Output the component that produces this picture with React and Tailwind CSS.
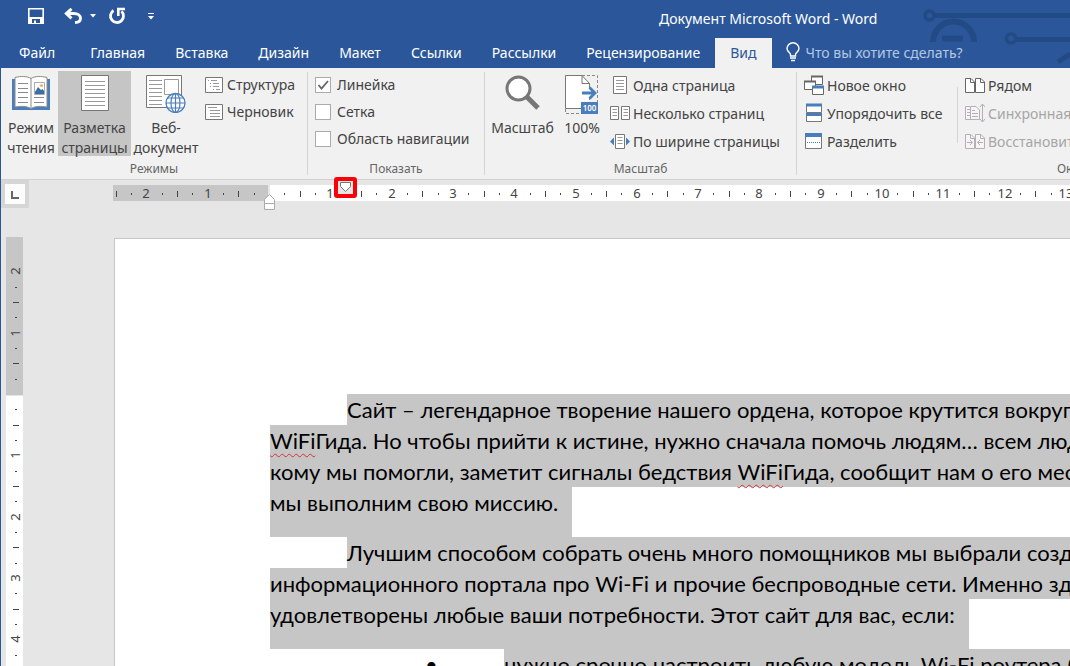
import { useState } from "react"

const CM = 61.3

const tabs = ["Главная", "Вставка", "Дизайн", "Макет", "Ссылки", "Рассылки", "Рецензирование", "Вид"]

/* ---------- title bar icons ---------- */

const SaveIcon = () => (
  <svg width="16" height="16" viewBox="0 0 16 16" fill="none">
    <path d="M.8 .8H15.200V15.200H.8Z" stroke="#fff" strokeWidth="1.600" />
    <path d="M1 9H15V15H1Z" fill="#fff" />
    <path d="M4 11H12V15H4Z" fill="#2b579a" />
    <path d="M6 12.500H8V15H6Z" fill="#fff" />
  </svg>
)

const UndoIcon = () => (
  <svg width="18" height="16" viewBox="0 0 18 16" fill="none">
    <path d="M2 5.500H10C14 5.500 16.500 7.500 16.500 10.300C16.500 13 14.500 14.500 11 14.500" stroke="#fff" strokeWidth="2.800" />
    <path d="M7.500 .8L2.400 5.500L7.500 10.300" stroke="#fff" strokeWidth="3" />
  </svg>
)

const RedoIcon = () => (
  <svg width="18" height="18" viewBox="0 0 18 18" fill="none">
    <path d="M5.500 3.500A6.500 6.500 0 1 0 13.500 4.300" stroke="#fff" strokeWidth="2.800" />
    <path d="M10.300 9V2H17" stroke="#fff" strokeWidth="2.600" />
  </svg>
)

const CaretIcon = () => (
  <svg width="6" height="4" viewBox="0 0 6 4">
    <path d="M0 0H6L3 3.500Z" fill="#fff" />
  </svg>
)

const CustomizeIcon = () => (
  <svg width="6" height="7" viewBox="0 0 6 7">
    <path d="M0 0H6V1H0ZM0 3H6L3 6.500Z" fill="#fff" />
  </svg>
)

const BulbIcon = () => (
  <svg width="14" height="20" viewBox="0 0 14 20" fill="none" stroke="#fff" strokeWidth="1.400">
    <path d="M4.500 14V12.500C4.500 10.500 1 9.500 1 6.500A6 5.800 0 0 1 13 6.500C13 9.500 9.500 10.500 9.500 12.500V14Z" />
    <path d="M4 16H10M5 18.500H9" strokeWidth="1.600" />
  </svg>
)

const Circuit = () => (
  <svg className="absolute top-0 right-0" width="150" height="68" viewBox="0 0 150 68" fill="none" stroke="#224a84">
    <circle cx="9.500" cy="15.500" r="4.500" strokeWidth="3.500" />
    <path d="M14 15.500H150" strokeWidth="5" />
    <path d="M13 42A20.500 20.500 0 0 1 54 42" strokeWidth="6" />
    <path d="M22 38.500H43" strokeWidth="6" />
    <circle cx="91" cy="38.500" r="4.500" strokeWidth="3.500" />
    <path d="M96 39.500H150" strokeWidth="5" />
    <path d="M138 62L150 54" strokeWidth="5" />
  </svg>
)

/* ---------- ribbon icons ---------- */

const BookIcon = () => (
  <svg width="38" height="36" viewBox="0 0 38 36" fill="none">
    <path d="M0 4H38V35H0Z" fill="#4a7ebb" />
    <path d="M3 2.500C9 1 15 1 19 3.500C23 1 29 1 35 2.500V32C29 31 23 31 19 33.500C15 31 9 31 3 32Z" fill="#fff" stroke="#8a8a8a" />
    <path d="M19 3.500V33" stroke="#8a8a8a" />
    <path d="M6 8.500H16M6 13.500H16M6 17.500H16M6 22.500H16M6 27.500H16M22 22.500H32M22 27.500H32" stroke="#8a8a8a" />
    <path d="M22.500 7.500H32.500V19.500H22.500Z" fill="#fff" stroke="#aaa" />
    <path d="M23 19V17L26 12L29 15L30.500 14L32 16V19Z" fill="#3a6ea8" />
    <circle cx="29.500" cy="10.500" r="1.600" fill="#f0b35a" />
  </svg>
)

const PageIcon = () => (
  <svg width="28" height="36" viewBox="0 0 28 36" fill="none">
    <path d="M.5 .5H27.500V35.500H.5Z" fill="#fff" stroke="#777" />
    <path d="M4 6.500H24M4 10.500H24M4 14.500H24M4 18.500H24M4 22.500H24M4 26.500H24M4 30.500H24" stroke="#999" />
  </svg>
)

const WebIcon = () => (
  <svg width="40" height="38" viewBox="0 0 40 38" fill="none">
    <path d="M.5 .5H35.500V32.500H.5Z" fill="#fff" stroke="#777" />
    <path d="M3 5.500H16M3 9.500H16M3 13.500H16M3 17.500H16M3 21.500H16M3 25.500H16M3 29.500H16" stroke="#999" />
    <path d="M18.500 4.500H32.500V19.500H18.500Z" stroke="#999" />
    <circle cx="29.500" cy="28" r="9.500" fill="#fff" stroke="#4a7ebb" strokeWidth="1.300" />
    <ellipse cx="29.500" cy="28" rx="4.500" ry="9.500" stroke="#4a7ebb" strokeWidth="1.200" />
    <path d="M20 28H39M21.500 23H37.500M21.500 33H37.500M29.500 18V38" stroke="#4a7ebb" strokeWidth="1.200" />
  </svg>
)

const OutlineIcon = () => (
  <svg width="18" height="16" viewBox="0 0 18 16" fill="none">
    <path d="M.5 .5H17.500V15.500H.5Z" fill="#fff" stroke="#777" />
    <path d="M3 3.500H4M6 3.500H12M5 6.500H6M8 6.500H14M5 9.500H6M8 9.500H14M8 12.500H9M11 12.500H15" stroke="#999" />
  </svg>
)

const DraftIcon = () => (
  <svg width="18" height="16" viewBox="0 0 18 16" fill="none">
    <path d="M.5 .5H17.500V15.500H.5Z" fill="#fff" stroke="#777" />
    <path d="M3 3.500H12M5 6.500H15M5 9.500H15M5 12.500H15" stroke="#999" />
  </svg>
)

const ZoomIcon = () => (
  <svg width="36" height="36" viewBox="0 0 36 36" fill="none">
    <path d="M20 20L33 33" stroke="#777" strokeWidth="5" />
    <circle cx="13.500" cy="13.500" r="11.500" fill="#fff" stroke="#777" strokeWidth="3" />
  </svg>
)

const HundredIcon = () => (
  <svg width="34" height="40" viewBox="0 0 34 40" fill="none">
    <path d="M.5 34V38.500H16M17 .5H32.500V28" stroke="#888" strokeDasharray="3 2" />
    <path d="M.5 .5H17L24.500 8.500V33.500H.5Z" fill="#fff" />
    <path d="M24.500 13V8.500L17 .5H.5V33.500H16M17 .5V8.500H24.500" stroke="#777" />
    <path d="M24.500 22V28" stroke="#888" strokeDasharray="3 2" />
    <path d="M17 18H29M24.500 12.500L30 18L24.500 23.500" stroke="#4a7ebb" strokeWidth="2.800" />
    <path d="M16 27H33V39H16Z" fill="#4a7ebb" />
    <text x="24.500" y="36" textAnchor="middle" fontSize="8" fontWeight="600" fill="#fff">100</text>
  </svg>
)

const OnePageIcon = () => (
  <svg width="20" height="18" viewBox="0 0 20 18" fill="none">
    <path d="M3.500 .5H16.500V17.500H3.500Z" fill="#fff" stroke="#777" />
    <path d="M6 4.500H14M6 7.500H14M6 10.500H14M6 13.500H14" stroke="#999" />
  </svg>
)

const ManyPagesIcon = () => (
  <svg width="20" height="14" viewBox="0 0 20 14" fill="none">
    <path d="M.5 .5H8.500V13.500H.5ZM11.500 .5H19.500V13.500H11.500Z" fill="#fff" stroke="#777" />
    <path d="M2.500 3.500H7M2.500 6.500H7M2.500 9.500H7M13.500 3.500H18M13.500 6.500H18M13.500 9.500H18" stroke="#999" />
  </svg>
)

const PageWidthIcon = () => (
  <svg width="20" height="15" viewBox="0 0 20 15" fill="none">
    <path d="M5.500 .5H14.500V14.500H5.500Z" fill="#fff" stroke="#777" />
    <path d="M7.500 3.500H12.500M7.500 6.500H12.500M7.500 9.500H12.500" stroke="#999" />
    <path d="M4 3.500V11.500L0 7.500ZM16 3.500V11.500L20 7.500Z" fill="#4a7ebb" />
  </svg>
)

const NewWindowIcon = () => (
  <svg width="20" height="20" viewBox="0 0 20 20" fill="none">
    <path d="M7.500 1.500H18.500V9.500H7.500Z" fill="#fff" stroke="#666" />
    <path d="M7 1.500H19" stroke="#666" strokeWidth="2" />
    <path d="M.5 6.500H11.500V14.500H.5Z" fill="#fff" stroke="#666" />
    <path d="M0 6.500H12" stroke="#666" strokeWidth="2" />
    <path d="M8.500 11.500H19.500V19.500H8.500Z" fill="#fff" stroke="#666" />
    <path d="M8 12H20" stroke="#4a7ebb" strokeWidth="3" />
  </svg>
)

const ArrangeIcon = () => (
  <svg width="20" height="20" viewBox="0 0 20 20" fill="none">
    <path d="M2.500 1.500H17.500V9.500H2.500ZM2.500 10.500H17.500V18.500H2.500Z" fill="#fff" stroke="#777" />
    <path d="M2 2H18M2 11.500H18" stroke="#4a7ebb" strokeWidth="3" />
  </svg>
)

const SplitIcon = () => (
  <svg width="20" height="16" viewBox="0 0 20 16" fill="none">
    <path d="M1.500 1.500H17.500V15.500H1.500Z" fill="#fff" stroke="#777" />
    <path d="M1 2H18" stroke="#4a7ebb" strokeWidth="4" />
    <path d="M3 9.500H16" stroke="#4a7ebb" strokeDasharray="1 1" />
  </svg>
)

const SideBySideIcon = () => (
  <svg width="20" height="15" viewBox="0 0 20 15" fill="none" stroke="#666">
    <path d="M.5 .5H6L9.500 4V14.500H.5ZM10.500 .5H16L19.500 4V14.500H10.500Z" fill="#fff" />
    <path d="M5.500 .5V4.500H9.500M15.500 .5V4.500H19.500" />
  </svg>
)

const SyncIcon = () => (
  <svg width="20" height="20" viewBox="0 0 20 20" fill="none" stroke="#b5b0b5">
    <path d="M8 16.500H.5V3.500H5M5.500 3.500H11L14.500 7V16.500H5.500Z" fill="#f7f3f7" />
    <path d="M2 6.500H5M2 9.500H5M2 12.500H5M7 7.500H10M7 10.500H13M7 13.500H13M17.500 1V19M15 4L17.500 1L20 4M15 16L17.500 19L20 16" />
  </svg>
)

const ResetIcon = () => (
  <svg width="20" height="15" viewBox="0 0 20 15" fill="none" stroke="#b5b0b5">
    <path d="M.5 .5H6L9.500 4V14.500H.5ZM10.500 .5H16L19.500 4V14.500H10.500Z" fill="#f7f3f7" />
    <path d="M5.500 .5V4.500H9.500M15.500 .5V4.500H19.500M2 8.500H7M5 6L7.500 8.500L5 11M18 8.500H13M15 6L12.500 8.500L15 11" />
  </svg>
)

/* ---------- ribbon parts ---------- */

const Group = ({ title, className, children }) => (
  <section className={`flex shrink-0 flex-col ${className}`}>
    <div className="flex h-[91px] pt-[3px]">{children}</div>
    <h2 className="text-center text-[12px] leading-5 text-[#666]">{title}</h2>
  </section>
)

const BigButton = ({ icon, lines, active, className }) => (
  <button type="button" className={`flex h-[85px] shrink-0 flex-col items-center whitespace-nowrap ${active ? "bg-[#c5c5c5]" : ""} ${className}`}>
    <span className="flex h-[47px] shrink-0 items-start pt-1">{icon}</span>
    {lines.map((line) => (
      <span key={line} className="leading-5">{line}</span>
    ))}
  </button>
)

const SmallButton = ({ icon, label, disabled }) => (
  <button type="button" disabled={disabled} className="flex h-7 items-center gap-[3px] whitespace-nowrap disabled:text-[#a6a6a6]">
    {icon}
    {label}
  </button>
)

const CompactButton = ({ icon, label }) => (
  <button type="button" className="flex h-[27px] items-center gap-1 whitespace-nowrap">
    {icon}
    {label}
  </button>
)

const CheckOption = ({ label, defaultChecked }) => (
  <label className="flex h-[27px] items-center gap-[6px] whitespace-nowrap">
    <span className="grid">
      <input type="checkbox" defaultChecked={defaultChecked} className="peer col-start-1 row-start-1 size-4 appearance-none border border-[#ababab] bg-white" />
      <svg className="invisible col-start-1 row-start-1 peer-checked:visible" width="16" height="16" viewBox="0 0 16 16" fill="none">
        <path d="M3.500 8L6.500 11.500L13 4" stroke="#666" strokeWidth="1.800" />
      </svg>
    </span>
    {label}
  </label>
)

const Separator = ({ className }) => <div className={`w-px shrink-0 bg-[#d4d4d4] ${className}`} />

/* ---------- rulers ---------- */

// quarter marks between two numbers: dot, dash, dot
const rulerMarks = (from, to) => {
  const marks = []
  for (let q = from * 4; q <= to * 4; q++) {
    if (q === 0) continue
    const rest = Math.abs(q) % 4
    marks.push({ q, pos: Math.round((q * CM) / 4), kind: rest === 0 ? "number" : rest === 2 ? "dash" : "dot" })
  }
  return marks
}

const HorizontalRuler = () => (
  <svg className="h-10 flex-1 overflow-visible" fontSize="13" fill="#444">
    <rect x="0" y="5" width="155" height="16" fill="#c6c6c6" />
    <rect x="157" y="5" width="100%" height="16" fill="#fff" />
    {rulerMarks(-2.5, 13.75).map(({ q, pos, kind }) => {
      const x = 156 + pos
      if (kind === "number") return <text key={q} x={x} y="18" textAnchor="middle">{Math.abs(q / 4)}</text>
      if (kind === "dash") return <rect key={q} x={x} y="11" width="1" height="6" />
      return <rect key={q} x={x} y="13" width="1" height="2" />
    })}
    <path d="M151.500 23.500V19.500L156.500 14.500L161.500 19.500V23.500ZM151.500 23.500H161.500V29.500H151.500Z" fill="#fff" stroke="#ababab" />
    <rect x="223" y="-1" width="19" height="17" rx="1" fill="#e6e6e6" stroke="#fb0007" strokeWidth="4" />
    <path d="M227.500 2.500H237.500V6.500L232.500 11.500L227.500 6.500Z" fill="#fff" stroke="#777" />
  </svg>
)

const VerticalRuler = () => (
  <svg className="ml-[5px] h-full w-[17px] shrink-0" fontSize="13" fill="#444">
    <rect x="0" y="0" width="17" height="158" fill="#c6c6c6" />
    <rect x="0" y="159" width="17" height="100%" fill="#fff" />
    {rulerMarks(-2, 4.75).map(({ q, pos, kind }) => {
      const y = 157 + pos
      if (kind === "number") return <text key={q} transform={`translate(14 ${y}) rotate(-90)`} textAnchor="middle">{Math.abs(q / 4)}</text>
      if (kind === "dash") return <rect key={q} x="7" y={y} width="6" height="1" />
      return <rect key={q} x="9" y={y} width="2" height="1" />
    })}
  </svg>
)

/* ---------- document ---------- */

const Misspelled = ({ children }) => (
  <span className="underline decoration-[#d13438] decoration-wavy decoration-1 underline-offset-4">{children}</span>
)

const Line = ({ indent, children }) => (
  <span className={`block h-[31px] bg-[#c6c6c6] ${indent ? "ml-[77px]" : ""}`}>{children}</span>
)

// last line of a paragraph, the selection also takes the spacing below it
const LastLine = ({ children }) => (
  <span className="block h-[50px] w-fit bg-[#c6c6c6] pr-[14px]">{children}</span>
)

const App = () => {
  const [activeTab, setActiveTab] = useState("Вид")

  return (
    <div className="flex h-screen flex-col overflow-hidden border-l border-[#2b579a] bg-[#e6e6e6] font-['Noto_Sans',sans-serif] text-[14px] text-[#444]">
      <header className="relative shrink-0 bg-[#2b579a] text-white">
        <Circuit />
        <div className="relative flex h-[38px] items-center pb-0.5">
          <div className="flex h-8 w-[658px] shrink-0 items-center self-start pl-[27px]">
            <button type="button" aria-label="Сохранить"><SaveIcon /></button>
            <button type="button" aria-label="Отменить" className="ml-5"><UndoIcon /></button>
            <button type="button" aria-label="Список отмены" className="ml-2"><CaretIcon /></button>
            <button type="button" aria-label="Повторить" className="ml-3"><RedoIcon /></button>
            <button type="button" aria-label="Настройка панели" className="ml-[22px]"><CustomizeIcon /></button>
          </div>
          <h1 className="whitespace-nowrap">Документ Microsoft Word - Word</h1>
        </div>
        <nav className="relative flex h-[30px] items-stretch whitespace-nowrap">
          <button type="button" className="pr-5 pb-0.5 pl-[18px]">Файл</button>
          {tabs.map((tab) => (
            <button
              key={tab}
              type="button"
              onClick={() => setActiveTab(tab)}
              className={`px-[15px] pb-0.5 ${activeTab === tab ? "bg-[#f1f1f1] text-[#2b579a]" : ""}`}
            >
              {tab}
            </button>
          ))}
          <label className="ml-[14px] flex items-center gap-[6px] pb-0.5">
            <BulbIcon />
            <input type="text" aria-label="Что вы хотите сделать?" placeholder="Что вы хотите сделать?" className="w-[200px] bg-transparent outline-none placeholder:text-[#b5c7e3]" />
          </label>
        </nav>
      </header>

      <div className="flex h-28 shrink-0 overflow-hidden border-b border-[#d2d2d2] bg-[#f1f1f1]">
        <Group title="Режимы" className="w-[306px]">
          <BigButton icon={<BookIcon />} lines={["Режим", "чтения"]} className="ml-[3px] w-[54px]" />
          <BigButton icon={<PageIcon />} lines={["Разметка", "страницы"]} active className="w-[73px]" />
          <BigButton icon={<WebIcon />} lines={["Веб-", "документ"]} className="w-[70px]" />
          <div className="ml-1 flex flex-col">
            <CompactButton icon={<OutlineIcon />} label="Структура" />
            <CompactButton icon={<DraftIcon />} label="Черновик" />
          </div>
        </Group>
        <Separator className="mt-1 mb-1" />
        <Group title="Показать" className="w-[176px]">
          <div className="ml-[7px] flex flex-col">
            <CheckOption label="Линейка" defaultChecked />
            <CheckOption label="Сетка" />
            <CheckOption label="Область навигации" />
          </div>
        </Group>
        <Separator className="mt-1 mb-1" />
        <Group title="Масштаб" className="w-[311px]">
          <BigButton icon={<ZoomIcon />} lines={["Масштаб"]} className="w-[75px]" />
          <BigButton icon={<HundredIcon />} lines={["100%"]} className="w-[44px]" />
          <div className="ml-[6px] flex flex-col">
            <SmallButton icon={<OnePageIcon />} label="Одна страница" />
            <SmallButton icon={<ManyPagesIcon />} label="Несколько страниц" />
            <SmallButton icon={<PageWidthIcon />} label="По ширине страницы" />
          </div>
        </Group>
        <Separator className="mt-1 mb-1" />
        <Group title="Окно" className="w-[550px]">
          <div className="ml-[7px] flex w-[153px] flex-col">
            <SmallButton icon={<NewWindowIcon />} label="Новое окно" />
            <SmallButton icon={<ArrangeIcon />} label="Упорядочить все" />
            <SmallButton icon={<SplitIcon />} label="Разделить" />
          </div>
          <Separator className="mt-4 mb-4" />
          <div className="ml-[7px] flex flex-col">
            <SmallButton icon={<SideBySideIcon />} label="Рядом" />
            <SmallButton icon={<SyncIcon />} label="Синхронная" disabled />
            <SmallButton icon={<ResetIcon />} label="Восстановить" disabled />
          </div>
        </Group>
      </div>

      <div className="flex h-[57px] shrink-0">
        <div className="mr-[84px] size-7 shrink-0 bg-[#d6d6d6] p-1">
          <button type="button" aria-label="Табуляция" className="grid size-5 place-items-center bg-[#fcfcfc]">
            <svg width="10" height="10" viewBox="0 0 10 10" fill="none">
              <path d="M2 2V9H9" stroke="#666" strokeWidth="2" />
            </svg>
          </button>
        </div>
        <HorizontalRuler />
      </div>

      <div className="flex min-h-0 flex-1">
        <VerticalRuler />
        <main className="mt-px ml-[91px] min-w-0 flex-1 overflow-hidden border-t border-l border-[#c6c6c6] bg-white pt-[155px] pl-[155px] font-['Lato',sans-serif] text-[22px] leading-[31px] whitespace-nowrap text-black">
          <p>
            <Line indent>Сайт – легендарное творение нашего ордена, которое крутится вокруг</Line>
            <Line><Misspelled>WiFi</Misspelled>Гида. Но чтобы прийти к истине, нужно сначала помочь людям… всем люд</Line>
            <Line>кому мы помогли, заметит сигналы бедствия <Misspelled>WiFi</Misspelled>Гида, сообщит нам о его мес</Line>
            <LastLine>мы выполним свою миссию.</LastLine>
          </p>
          <p>
            <Line indent>Лучшим способом собрать очень много помощников мы выбрали созд</Line>
            <Line>информационного портала про Wi-Fi и прочие беспроводные сети. Именно зд</Line>
            <LastLine>удовлетворены любые ваши потребности. Этот сайт для вас, если:</LastLine>
          </p>
          <ul>
            <li className="flex">
              <span className="w-[234px] shrink-0 pl-[155px]">•</span>
              <span className="flex-1 bg-[#c6c6c6]">нужно срочно настроить любую модель Wi-Fi роутера б</span>
            </li>
          </ul>
        </main>
      </div>
    </div>
  )
}

export default App
